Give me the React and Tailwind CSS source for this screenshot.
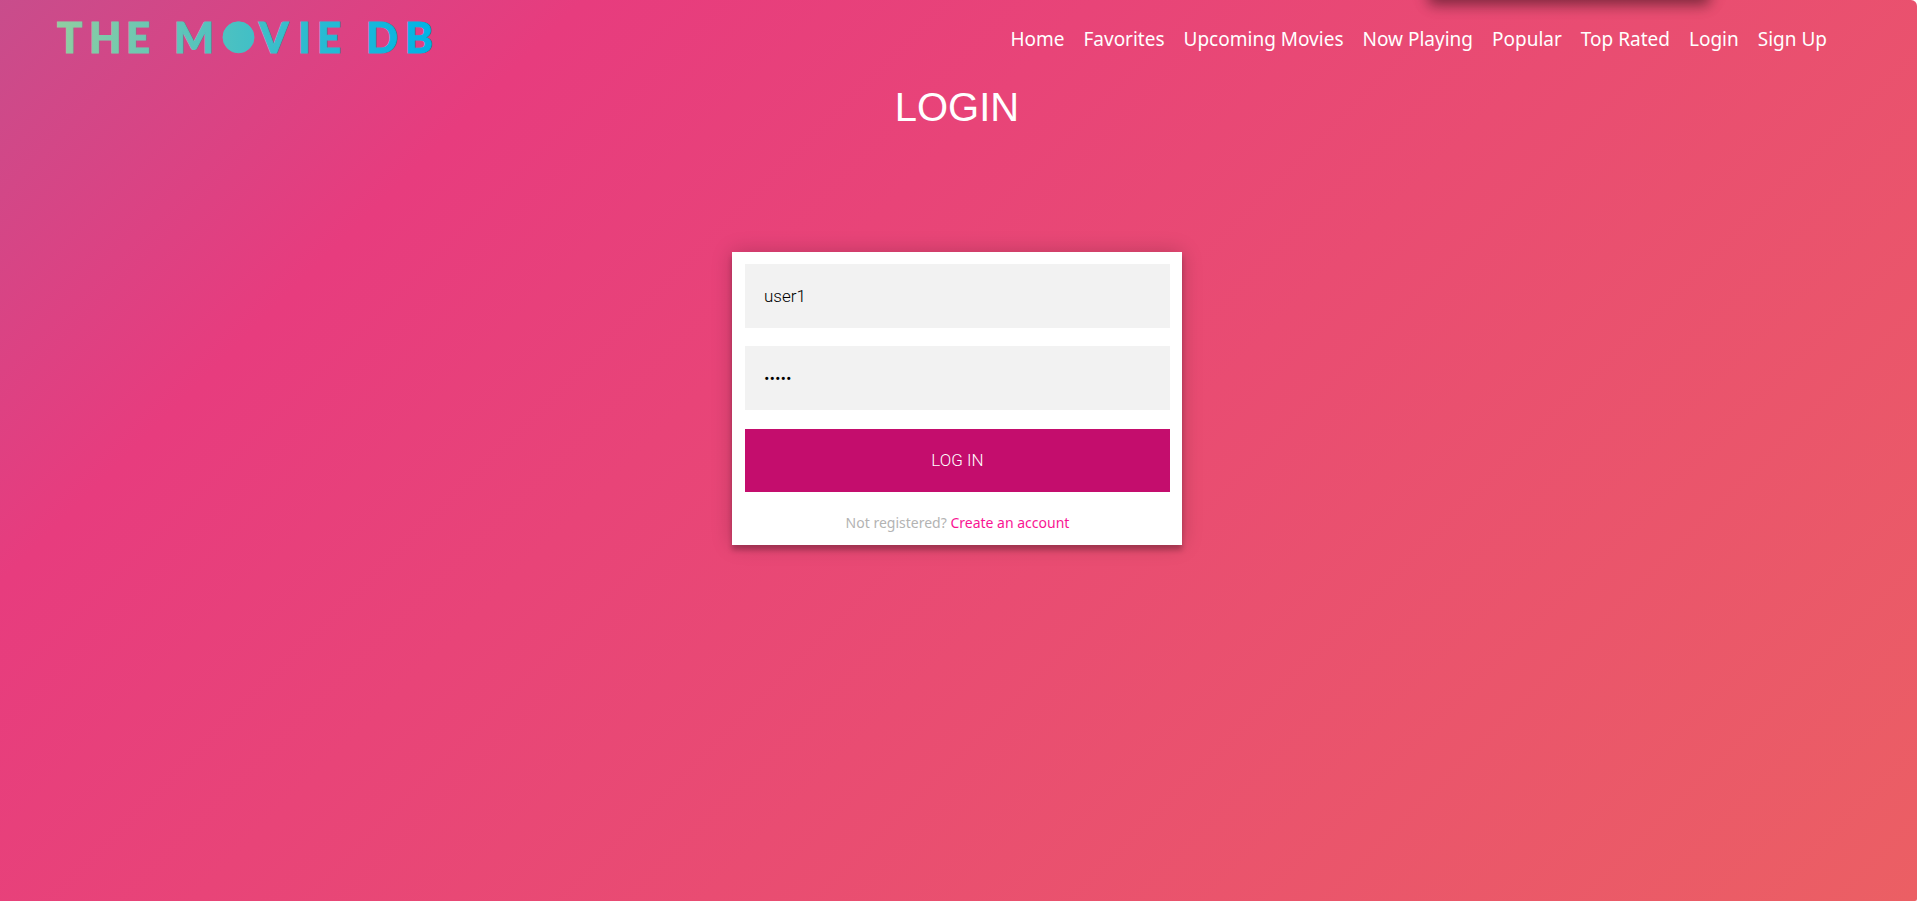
const links = ['Home', 'Favorites', 'Upcoming Movies', 'Now Playing', 'Popular', 'Top Rated', 'Login', 'Sign Up'];

function Logo() {
  return (
    <svg width="384" height="62" viewBox="0 0 384 62" role="img" aria-label="The Movie DB" className="block">
      <defs>
        <linearGradient id="brand" gradientUnits="userSpaceOnUse" x1="0" y1="0" x2="376" y2="0">
          <stop offset="0" stopColor="#90cea1" />
          <stop offset="0.56" stopColor="#3cbec9" />
          <stop offset="1" stopColor="#00b3e5" />
        </linearGradient>
      </defs>
      <g
        fill="url(#brand)"
        stroke="url(#brand)"
        strokeWidth="1"
        fontFamily="Lato, 'Liberation Sans', sans-serif"
        fontWeight="900"
        fontSize="42"
      >
        <text y="45" x="1 33 70">THE</text>
        <text y="45" x="118">M</text>
        <circle cx="182.5" cy="29.3" r="15.5" />
        <text y="45" x="203 242 261">VIE</text>
        <text y="45" x="310 349">DB</text>
      </g>
    </svg>
  );
}

export default function App() {
  return (
    <div className="min-h-screen bg-white">
      <div className="relative min-h-screen overflow-hidden rounded-tr-md rounded-br-xs bg-[linear-gradient(-45deg,#ee7752,#e73c7e,#23a6d5,#23d5ab)] bg-[length:400%_400%] bg-[position:97%_50%]">
        <div
          aria-hidden="true"
          className="absolute -top-10 right-[208px] h-10 w-[280px] shadow-[0_0_20px_rgba(0,0,0,0.2),0_5px_12px_rgba(0,0,0,0.36)]"
        />
        <header className="flex h-[78px] items-center justify-between pl-14 pr-[90px]">
          <a href="#home" className="block">
            <Logo />
          </a>
          <nav className="flex gap-[19px] font-['Noto_Sans',sans-serif] text-[19px] leading-6 text-white">
            {links.map((label) => (
              <a key={label} href="#nav" className="whitespace-nowrap">
                {label}
              </a>
            ))}
          </nav>
        </header>
        <main className="flex flex-col items-center pr-[3px]">
          <h1 className="font-['Liberation_Sans',sans-serif] text-[40px] leading-[58px] text-white">LOGIN</h1>
          <form
            onSubmit={(e) => e.preventDefault()}
            className="mt-[116px] flex w-[450px] max-w-full flex-col bg-white pb-[10px] pl-[13px] pr-3 pt-3 shadow-[0_0_20px_rgba(0,0,0,0.2),0_5px_5px_rgba(0,0,0,0.24)]"
          >
            <input
              type="text"
              aria-label="Username"
              defaultValue="user1"
              className="h-16 bg-[#f2f2f2] px-[19px] font-['Roboto',sans-serif] text-[17px] font-light text-black outline-none"
            />
            <input
              type="password"
              aria-label="Password"
              defaultValue="user1"
              className="mt-[18px] h-16 bg-[#f2f2f2] px-[19px] font-['Roboto',sans-serif] text-[17px] font-light text-black outline-none"
            />
            <button
              type="submit"
              className="mt-[19px] h-[63px] bg-[#c40d6d] font-['Roboto',sans-serif] text-[17px] font-light text-white"
            >
              LOG IN
            </button>
            <p className="mt-[19px] text-center font-['Noto_Sans',sans-serif] text-[14px] leading-6 text-[#b3b3b3]">
              Not registered?{' '}
              <a href="#register" className="text-[#f91493]">
                Create an account
              </a>
            </p>
          </form>
        </main>
      </div>
    </div>
  );
}
